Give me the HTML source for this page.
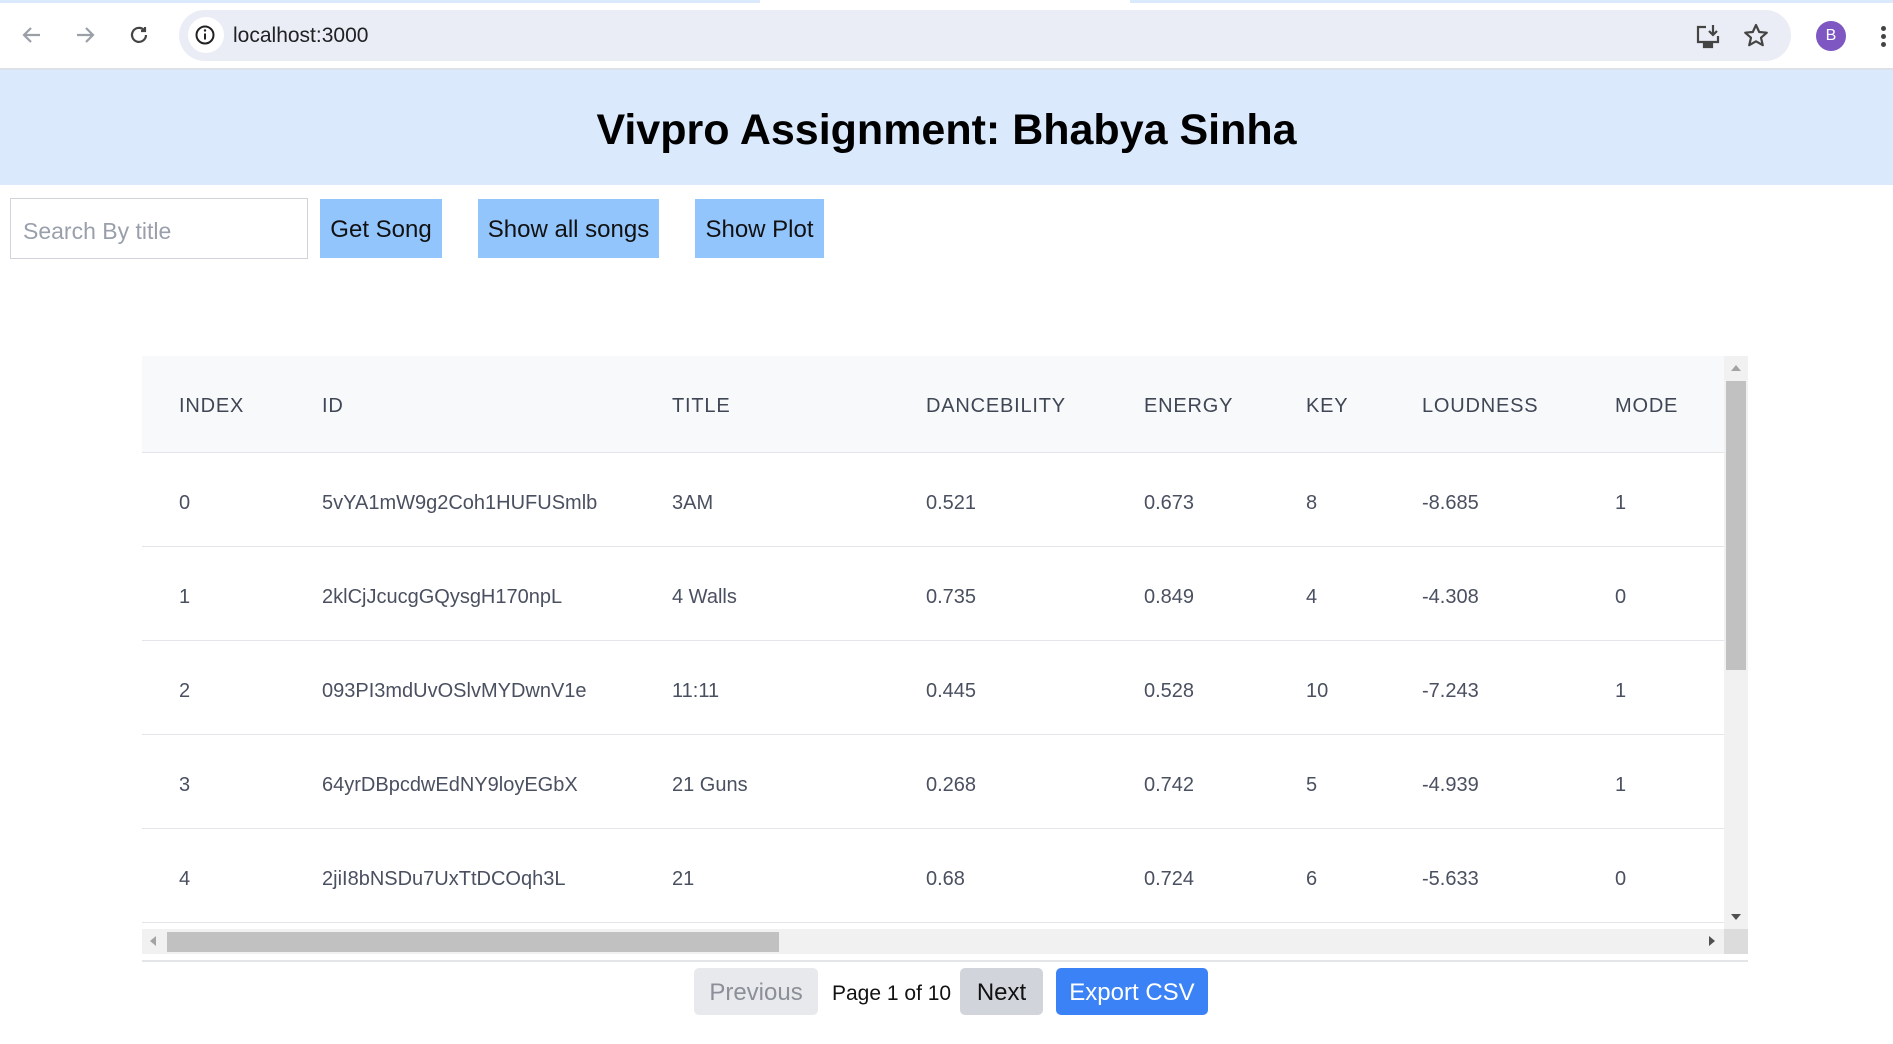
<!DOCTYPE html>
<html><head><meta charset="utf-8"><style>
*{box-sizing:border-box;margin:0;padding:0}
body{width:1893px;height:1044px;overflow:hidden;background:#fff;font-family:"Liberation Sans",sans-serif;position:relative}
.abs{position:absolute}
.chrome{left:0;top:0;width:1893px;height:70px;background:#fff;border-bottom:2px solid #dde1e8}
.addr{left:179px;top:10px;width:1612px;height:51px;background:#eaedf5;border-radius:26px}
.hdr{left:0;top:70px;width:1893px;height:115px;background:#dbe9fd}
.hdr h1{position:absolute;left:0;right:0;top:36px;text-align:center;font-size:43px;font-weight:bold;color:#000}
.btn{background:#93c5fd;font-size:24px;color:#111;display:flex;align-items:center;justify-content:center;height:59px;top:199px;padding-top:3px}
.tbl{left:142px;top:356px;width:1606px;height:598px;background:#fff}
.th{top:356px;left:142px;width:1582px;height:97px;background:#f8f9fb;border-bottom:1px solid #e3e5e8}
.hc{font-size:20px;letter-spacing:0.8px;color:#3f4654;top:395px}
.row{left:142px;width:1582px;height:94px;border-bottom:1px solid #e3e5e8}
.c{font-size:20px;color:#4a5060;margin-top:2px}
.pg{top:968px;height:47px;border-radius:5px;display:flex;align-items:center;justify-content:center;font-size:24px;padding-top:3px}
</style></head><body>
<div class="abs chrome"></div>
<div class="abs" style="left:0;top:0;width:760px;height:3px;background:#dbe9fd"></div>
<div class="abs" style="left:1130px;top:0;width:763px;height:3px;background:#dbe9fd"></div>
<svg class="abs" style="left:18px;top:22px" width="130" height="26" viewBox="0 0 130 26" fill="none" stroke-width="2.2">
<path d="M22 13H6M13 6L6 13l7 7" stroke="#9aa0a6"/>
<path d="M59 13h16M68 6l7 7-7 7" stroke="#9aa0a6"/>
<path d="M128 13a7 7 0 1 1-2-5" stroke="#444"/><path d="M127 5v4h-4" stroke="#444"/>
</svg>
<div class="abs addr"></div>
<div class="abs" style="left:188px;top:17px;width:36px;height:36px;border-radius:50%;background:#fff"></div>
<svg class="abs" style="left:194px;top:24px" width="22" height="22" viewBox="0 0 22 22"><circle cx="11" cy="11" r="8.5" fill="none" stroke="#222" stroke-width="2"/><path d="M11 9.5v6" stroke="#222" stroke-width="2"/><circle cx="11" cy="6.5" r="1.2" fill="#222"/></svg>
<div class="abs" style="left:233px;top:24px;font-size:21px;color:#202124">localhost:3000</div>
<svg class="abs" style="left:1694px;top:22px" width="30" height="30" viewBox="0 0 30 30" fill="none" stroke="#444" stroke-width="2.2"><path d="M12 5H4v15h20v-6"/><path d="M19 3v10M15 9l4 4 4-4"/><path d="M10 22h8v3h-8z" fill="#444"/></svg>
<svg class="abs" style="left:1742px;top:22px" width="28" height="28" viewBox="0 0 28 28"><path d="M14 3l3.2 7 7.6.7-5.8 5 1.8 7.5L14 19.3 7.2 23.2 9 15.7l-5.8-5 7.6-.7z" fill="none" stroke="#444" stroke-width="2.2" stroke-linejoin="round"/></svg>
<div class="abs" style="left:1816px;top:21px;width:30px;height:30px;border-radius:50%;background:#7e57c2;color:#fff;font-size:16px;display:flex;align-items:center;justify-content:center">B</div>
<div class="abs" style="left:1881px;top:26px;width:5px;height:5px;border-radius:50%;background:#444;box-shadow:0 8px 0 #444,0 16px 0 #444"></div>
<div class="abs hdr"><h1>Vivpro Assignment: Bhabya Sinha</h1></div>
<div class="abs" style="left:10px;top:198px;width:298px;height:61px;border:1px solid #d0d3da;font-size:23px;color:#9aa0ab;padding:19px 12px 0">Search By title</div>
<div class="abs btn" style="left:320px;width:122px">Get Song</div>
<div class="abs btn" style="left:478px;width:181px">Show all songs</div>
<div class="abs btn" style="left:695px;width:129px">Show Plot</div>
<div class="abs tbl"></div>
<div class="abs th"></div>
<div class="abs hc" style="left:179px">INDEX</div>
<div class="abs hc" style="left:322px">ID</div>
<div class="abs hc" style="left:672px">TITLE</div>
<div class="abs hc" style="left:926px">DANCEBILITY</div>
<div class="abs hc" style="left:1144px">ENERGY</div>
<div class="abs hc" style="left:1306px">KEY</div>
<div class="abs hc" style="left:1422px">LOUDNESS</div>
<div class="abs hc" style="left:1615px">MODE</div>
<div class="abs row" style="top:453px"></div>
<div class="abs row" style="top:547px"></div>
<div class="abs row" style="top:641px"></div>
<div class="abs row" style="top:735px"></div>
<div class="abs row" style="top:829px"></div>
<div class="abs c" style="left:179px;top:490px">0</div><div class="abs c" style="left:322px;top:490px">5vYA1mW9g2Coh1HUFUSmlb</div><div class="abs c" style="left:672px;top:490px">3AM</div><div class="abs c" style="left:926px;top:490px">0.521</div><div class="abs c" style="left:1144px;top:490px">0.673</div><div class="abs c" style="left:1306px;top:490px">8</div><div class="abs c" style="left:1422px;top:490px">-8.685</div><div class="abs c" style="left:1615px;top:490px">1</div>
<div class="abs c" style="left:179px;top:584px">1</div><div class="abs c" style="left:322px;top:584px">2klCjJcucgGQysgH170npL</div><div class="abs c" style="left:672px;top:584px">4 Walls</div><div class="abs c" style="left:926px;top:584px">0.735</div><div class="abs c" style="left:1144px;top:584px">0.849</div><div class="abs c" style="left:1306px;top:584px">4</div><div class="abs c" style="left:1422px;top:584px">-4.308</div><div class="abs c" style="left:1615px;top:584px">0</div>
<div class="abs c" style="left:179px;top:678px">2</div><div class="abs c" style="left:322px;top:678px">093PI3mdUvOSlvMYDwnV1e</div><div class="abs c" style="left:672px;top:678px">11:11</div><div class="abs c" style="left:926px;top:678px">0.445</div><div class="abs c" style="left:1144px;top:678px">0.528</div><div class="abs c" style="left:1306px;top:678px">10</div><div class="abs c" style="left:1422px;top:678px">-7.243</div><div class="abs c" style="left:1615px;top:678px">1</div>
<div class="abs c" style="left:179px;top:772px">3</div><div class="abs c" style="left:322px;top:772px">64yrDBpcdwEdNY9loyEGbX</div><div class="abs c" style="left:672px;top:772px">21 Guns</div><div class="abs c" style="left:926px;top:772px">0.268</div><div class="abs c" style="left:1144px;top:772px">0.742</div><div class="abs c" style="left:1306px;top:772px">5</div><div class="abs c" style="left:1422px;top:772px">-4.939</div><div class="abs c" style="left:1615px;top:772px">1</div>
<div class="abs c" style="left:179px;top:866px">4</div><div class="abs c" style="left:322px;top:866px">2jiI8bNSDu7UxTtDCOqh3L</div><div class="abs c" style="left:672px;top:866px">21</div><div class="abs c" style="left:926px;top:866px">0.68</div><div class="abs c" style="left:1144px;top:866px">0.724</div><div class="abs c" style="left:1306px;top:866px">6</div><div class="abs c" style="left:1422px;top:866px">-5.633</div><div class="abs c" style="left:1615px;top:866px">0</div>
<div class="abs" style="left:1724px;top:356px;width:24px;height:573px;background:#f1f1f1"></div>
<div class="abs" style="left:1726px;top:381px;width:20px;height:289px;background:#c1c1c1"></div>
<div class="abs" style="left:1731px;top:365px;border:5px solid transparent;border-bottom:6px solid #a3a3a3;border-top:0"></div>
<div class="abs" style="left:1731px;top:914px;border:5px solid transparent;border-top:6px solid #505050;border-bottom:0"></div>
<div class="abs" style="left:142px;top:929px;width:1582px;height:25px;background:#f1f1f1"></div>
<div class="abs" style="left:1724px;top:929px;width:24px;height:25px;background:#dcdcdc"></div>
<div class="abs" style="left:167px;top:932px;width:612px;height:20px;background:#c1c1c1"></div>
<div class="abs" style="left:150px;top:936px;border:5px solid transparent;border-right:6px solid #a3a3a3;border-left:0"></div>
<div class="abs" style="left:1709px;top:936px;border:5px solid transparent;border-left:6px solid #505050;border-right:0"></div>
<div class="abs" style="left:142px;top:960px;width:1606px;height:2px;background:#e3e5e8"></div>
<div class="abs pg" style="left:694px;width:124px;background:#e8e9ec;color:#8a8f98">Previous</div>
<div class="abs" style="left:832px;top:982px;font-size:21px;color:#111">Page 1 of 10</div>
<div class="abs pg" style="left:960px;width:83px;background:#d1d5db;color:#111">Next</div>
<div class="abs pg" style="left:1056px;width:152px;background:#3b82f6;color:#fff">Export CSV</div>
</body></html>
